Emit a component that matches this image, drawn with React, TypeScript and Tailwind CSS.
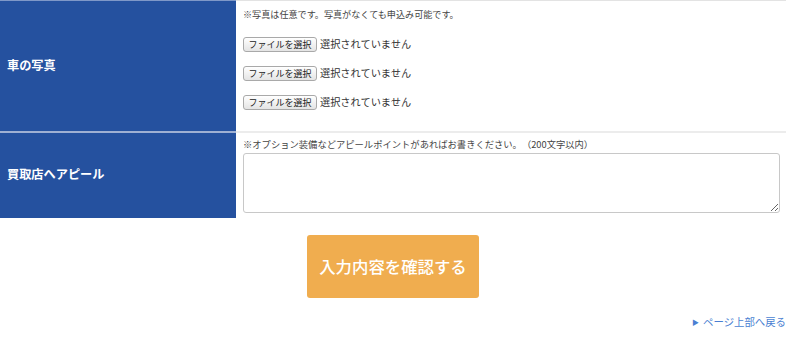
import React from "react";

const font = { fontFamily: '"Noto Sans CJK JP", "Noto Sans", sans-serif' };

function FileRow() {
  return (
    <div className="flex items-center h-[15px]">
      <div className="h-[15px] w-[74px] flex items-center justify-center rounded-[3px] border border-[#a9a9a9] bg-gradient-to-b from-[#ffffff] to-[#e4e4e4] text-[9px] leading-none text-[#222]">
        ファイルを選択
      </div>
      <span className="ml-[3px] text-[10.2px] leading-none text-[#333]">選択されていません</span>
    </div>
  );
}

export default function App() {
  return (
    <div className="w-[800px] h-[339px] bg-white [text-spacing-trim:space-all]" style={font}>
      <div className="w-[786px]">
        <div className="flex h-[131px]">
          <div className="w-[236px] bg-[#25519f] border-t border-[#7f98c8] flex items-center pl-[7px] pb-[2px]">
            <span className="text-white font-bold text-[12.2px]">車の写真</span>
          </div>
          <div className="flex-1 border-t border-[#e3e3e3] pl-[7px] pt-[7px]">
            <div className="text-[9.1px] leading-[13px] text-[#444]">※写真は任意です。写真がなくても申込み可能です。</div>
            <div className="mt-[16px] flex flex-col gap-[14px]">
              <FileRow />
              <FileRow />
              <FileRow />
            </div>
          </div>
        </div>
        <div className="flex h-[87px]">
          <div className="w-[236px] bg-[#25519f] border-t-2 border-[#9fb0d3] flex items-center pl-[7px] pb-[2px]">
            <span className="text-white font-bold text-[12.2px]">買取店へアピール</span>
          </div>
          <div className="flex-1 border-t-2 border-[#ececec] pl-[7px] pr-[6px] pt-[5px]">
            <div className="text-[9.3px] leading-[13px] text-[#444]">※オプション装備などアピールポイントがあればお書きください。（200文字以内）</div>
            <textarea className="mt-[2px] block w-full h-[60px] rounded-[3px] border border-[#c8c8c8] bg-white resize-y" />
          </div>
        </div>
        <div className="flex justify-center pt-[17px]">
          <div className="w-[172px] h-[63px] rounded-[3px] bg-[#f0ad4f] flex items-center justify-center text-white text-[16.4px] font-medium">
            入力内容を確認する
          </div>
        </div>
        <div className="flex justify-end items-center mt-[16px]">
          <span className="text-[#4a7fd2] text-[7px] mr-[4px]">▶</span>
          <span className="text-[#4a7fd2] text-[10.4px]">ページ上部へ戻る</span>
        </div>
      </div>
    </div>
  );
}
